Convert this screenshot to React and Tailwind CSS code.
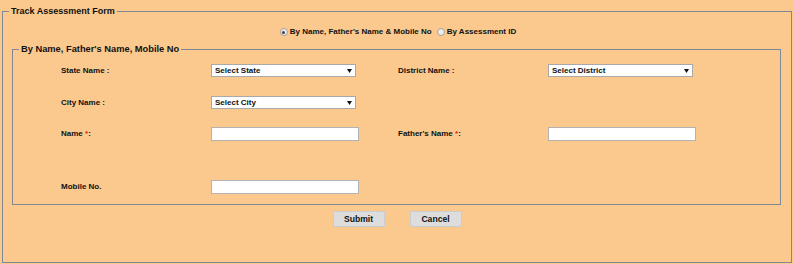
const Select = ({ text }) => {
  return (
    <div className="flex items-center justify-between w-[145px] h-[13px] bg-white border border-[#a9a9a9] pl-[3px] pr-[3px]">
      <span className="text-[8px] leading-[10px] font-bold">{text}</span>
      <svg width="5" height="4" viewBox="0 0 5 4">
        <path d="M0 0 L5 0 L2.5 4 Z" fill="#111" />
      </svg>
    </div>
  );
};

const TextBox = () => {
  return <input type="text" className="w-[148px] h-[14px] bg-white border border-[#b3b3b3] outline-none" />;
};

const Radio = ({ checked, label }) => {
  return (
    <label className="flex items-center gap-[2px]">
      <span className="flex items-center justify-center w-[8px] h-[8px] rounded-full border border-[#a0a0a0] bg-[#ececec]">
        {checked && <span className="w-[3px] h-[3px] rounded-full bg-[#444]"></span>}
      </span>
      <span className="text-[8px] leading-[10px] font-bold">{label}</span>
    </label>
  );
};

const Req = () => <span className="text-[#e0201a]">*</span>;

export default function App() {
  return (
    <div className="w-[793px] h-[264px] overflow-hidden bg-[#fbc98e] pt-[5px] pl-[2px] text-[#111] font-['Liberation_Sans',Arial,sans-serif]">
      <fieldset className="w-[790px] h-[258px] border border-[#7f8894]">
        <legend className="ml-[6px] px-[2px] text-[9px] leading-[12px] font-bold">Track Assessment Form</legend>

        <div className="flex justify-center items-center gap-[5px] h-[12px] mt-[9px] pl-[2px]">
          <Radio checked label="By Name, Father's Name & Mobile No" />
          <Radio label="By Assessment ID" />
        </div>

        <fieldset className="ml-[9px] mt-[5px] w-[769px] h-[162px] border border-[#7f8894]">
          <legend className="ml-[6px] px-[2px] text-[9.3px] leading-[12px] font-bold">By Name, Father's Name, Mobile No</legend>

          <div className="pl-[48px] text-[8px] font-bold">
            <div className="grid grid-cols-[150px_187px_150px_auto] items-center h-[13px] mt-[9px]">
              <span>State Name :</span>
              <Select text="Select State" />
              <span>District Name :</span>
              <Select text="Select District" />
            </div>
            <div className="grid grid-cols-[150px_187px_150px_auto] items-center h-[12px] mt-[19px]">
              <span>City Name :</span>
              <Select text="Select City" />
            </div>
            <div className="grid grid-cols-[150px_187px_150px_auto] items-center h-[14px] mt-[19px]">
              <span>Name <Req />:</span>
              <TextBox />
              <span>Father's Name <Req />:</span>
              <TextBox />
            </div>
            <div className="grid grid-cols-[150px_187px_150px_auto] items-center h-[13px] mt-[39px]">
              <span>Mobile No.</span>
              <TextBox />
            </div>
          </div>
        </fieldset>

        <div className="flex justify-center gap-[25px] mt-[6px]">
          <button className="w-[52px] h-[16px] bg-[#dddddd] border border-[#cccccc] text-[8.6px] font-bold">Submit</button>
          <button className="w-[52px] h-[16px] bg-[#dddddd] border border-[#cccccc] text-[8.6px] font-bold">Cancel</button>
        </div>
      </fieldset>
    </div>
  );
}
